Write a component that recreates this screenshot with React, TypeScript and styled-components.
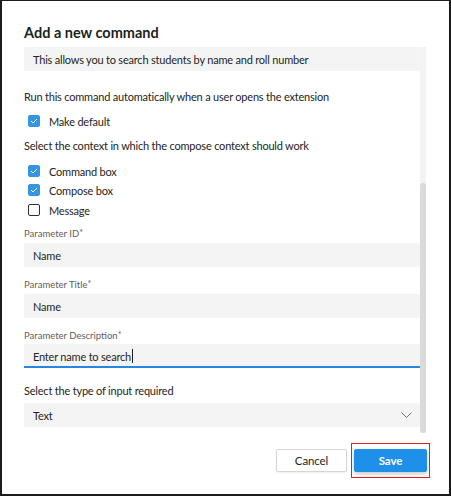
import React from 'react'
import styled, { createGlobalStyle } from 'styled-components'

const GlobalStyle = createGlobalStyle`
  html, body {
    margin: 0;
    padding: 0;
    background: #ffffff;
  }
  body {
    font-family: Lato, 'Noto Sans', sans-serif;
    color: #252423;
    letter-spacing: -0.2px;
  }
`

const Dialog = styled.div`
  box-sizing: border-box;
  width: 451px;
  height: 496px;
  border: 2px solid #1b1b1b;
  border-top-width: 1px;
  padding: 22px 19px 0 22px;
  display: flex;
  flex-direction: column;
`

const Title = styled.h1`
  margin: 0 0 4px;
  font-size: 14.5px;
  line-height: 20px;
  font-weight: 700;
  letter-spacing: 0;
  color: #201f1e;
`

const Body = styled.div`
  display: flex;
  height: 386px;
  margin-right: 4px;
`

const Content = styled.div`
  flex: 1;
  display: flex;
  flex-direction: column;
  overflow: hidden;
`

const ScrollTrack = styled.div`
  width: 6px;
  background: #f3f3f3;
  display: flex;
  flex-direction: column;
`

const ScrollThumb = styled.div<{ top: number; size: number }>`
  margin-top: ${(p) => p.top}px;
  height: ${(p) => p.size}px;
  background: #dadada;
  border-radius: 3px;
`

const Field = styled.div<{ gap?: number }>`
  display: flex;
  flex-direction: column;
  margin-top: ${(p) => p.gap ?? 0}px;
`

const SmallLabel = styled.label<{ space?: number }>`
  font-size: 9.5px;
  line-height: 14px;
  letter-spacing: 0;
  color: #605e5c;
  margin-bottom: ${(p) => p.space ?? 2}px;

  sup {
    font-size: 9px;
    line-height: 0;
    vertical-align: 1px;
  }
`

const Input = styled.div<{ focused?: boolean }>`
  box-sizing: border-box;
  height: 24px;
  background: #f4f4f4;
  border-radius: ${(p) => (p.focused ? '2px 2px 0 0' : '2px')};
  border-bottom: ${(p) => (p.focused ? '2px solid #2886de' : 'none')};
  padding: ${(p) => (p.focused ? '2px' : '0')} 9px 0;
  display: flex;
  align-items: center;
  font-size: 11px;
  color: #252423;
  white-space: nowrap;
`

const Caret = styled.span`
  display: inline-block;
  width: 1px;
  height: 14px;
  background: #201f1e;
  margin-left: 1px;
`

const Text = styled.p<{ gap?: number }>`
  margin: ${(p) => p.gap ?? 0}px 0 0;
  font-size: 11px;
  line-height: 16px;
  color: #252423;
`

const CheckRow = styled.label<{ gap?: number }>`
  display: flex;
  align-items: center;
  gap: 9px;
  height: 16px;
  margin-top: ${(p) => p.gap ?? 0}px;
  padding-left: 4px;
  font-size: 11px;
  color: #252423;
`

const Box = styled.span<{ checked?: boolean }>`
  box-sizing: border-box;
  width: 12px;
  height: 12px;
  border-radius: 2px;
  background: ${(p) => (p.checked ? '#3595e2' : '#ffffff')};
  border: 1px solid ${(p) => (p.checked ? '#3595e2' : '#323130')};
  display: flex;
  align-items: center;
  justify-content: center;
`

const Select = styled.div`
  box-sizing: border-box;
  height: 24px;
  margin-top: 4px;
  background: #f4f4f4;
  border-radius: 2px;
  padding: 0 8px 0 9px;
  display: flex;
  align-items: center;
  justify-content: space-between;
  font-size: 11px;
  color: #252423;
`

const Footer = styled.div`
  display: flex;
  justify-content: flex-end;
  align-items: center;
  gap: 4px;
  margin-top: 10px;
`

const Button = styled.button<{ primary?: boolean }>`
  box-sizing: border-box;
  width: ${(p) => (p.primary ? 73 : 71)}px;
  height: 23px;
  border-radius: 2px;
  font-family: inherit;
  font-size: 11.5px;
  letter-spacing: -0.1px;
  font-weight: ${(p) => (p.primary ? 700 : 400)};
  color: ${(p) => (p.primary ? '#ffffff' : '#252423')};
  background: ${(p) => (p.primary ? '#1f90ea' : '#ffffff')};
  border: 1px solid ${(p) => (p.primary ? '#1f90ea' : '#d8d6d4')};
  box-shadow: ${(p) =>
    p.primary ? '0 2px 4px rgba(0, 0, 0, 0.22)' : '0 1px 2px rgba(0, 0, 0, 0.08)'};
  padding: 0;
  cursor: pointer;
`

const FocusRing = styled.span`
  display: flex;
  border: 1px solid #e0202a;
  padding: 5px 2px;
`

const Check = () => (
  <svg width="8" height="6" viewBox="0 0 8 6">
    <polyline points="1,3 3,5 7,1" fill="none" stroke="#ffffff" strokeWidth="1" />
  </svg>
)

const Chevron = () => (
  <svg width="11" height="6" viewBox="0 0 11 6">
    <polyline points="0.5,0.5 5.5,5.5 10.5,0.5" fill="none" stroke="#7a7876" strokeWidth="1" />
  </svg>
)

const Label = ({ children, space }: { children: string; space?: number }) => (
  <SmallLabel space={space}>
    {children}
    <sup>*</sup>
  </SmallLabel>
)

export default function App() {
  return (
    <>
      <GlobalStyle />
      <Dialog>
        <Title>Add a new command</Title>
        <Body>
          <Content>
            <Input>This allows you to search students by name and roll number</Input>

            <Text gap={18}>Run this command automatically when a user opens the extension</Text>
            <CheckRow gap={8}>
              <Box checked>
                <Check />
              </Box>
              Make default
            </CheckRow>

            <Text gap={9}>Select the context in which the compose context should work</Text>
            <CheckRow gap={9}>
              <Box checked>
                <Check />
              </Box>
              Command box
            </CheckRow>
            <CheckRow gap={3}>
              <Box checked>
                <Check />
              </Box>
              Compose box
            </CheckRow>
            <CheckRow gap={4}>
              <Box />
              Message
            </CheckRow>

            <Field gap={9}>
              <Label>Parameter ID</Label>
              <Input>Name</Input>
            </Field>
            <Field gap={11}>
              <Label>Parameter Title</Label>
              <Input>Name</Input>
            </Field>
            <Field gap={11}>
              <Label space={1}>Parameter Description</Label>
              <Input focused>
                Enter name to search
                <Caret />
              </Input>
            </Field>

            <Text gap={15}>Select the type of input required</Text>
            <Select>
              Text
              <Chevron />
            </Select>
          </Content>
          <ScrollTrack>
            <ScrollThumb top={136} size={250} />
          </ScrollTrack>
        </Body>
        <Footer>
          <Button>Cancel</Button>
          <FocusRing>
            <Button primary>Save</Button>
          </FocusRing>
        </Footer>
      </Dialog>
    </>
  )
}
